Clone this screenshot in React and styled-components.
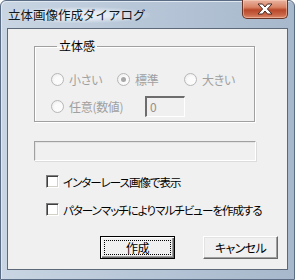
import React from "react";
import styled, { createGlobalStyle } from "styled-components";

const GlobalStyle = createGlobalStyle`
    html, body {
        margin: 0;
        padding: 0;
        background: #ffffff;
    }
    * {
        box-sizing: border-box;
    }
`;

const UI_FONT = `"Noto Sans CJK JP", "DejaVu Sans", sans-serif`;

const CloseIcon = () => (
    <svg width="18" height="12" viewBox="0 0 18 12">
        <path
            d="M2 1 H6.5 L9 4 L11.5 1 H16 L11.4 6 L16 11 H11.5 L9 8 L6.5 11 H2 L6.6 6 Z"
            fill="#ffffff"
            stroke="#4a2a22"
            strokeWidth="1"
            strokeLinejoin="round"
        />
    </svg>
);

const Radio = ({ checked, width, children }) => (
    <RadioItem width={width}>
        <RadioCircle>{checked && <RadioDot />}</RadioCircle>
        <OptionText>{children}</OptionText>
    </RadioItem>
);

const Check = ({ children }) => (
    <CheckRow>
        <CheckBox />
        <CheckText>{children}</CheckText>
    </CheckRow>
);

const App = () => {
    return (
        <>
            <GlobalStyle />
            <Window>
                <TitleBar>
                    <Title>立体画像作成ダイアログ</Title>
                    <CloseButton>
                        <CloseIcon />
                    </CloseButton>
                </TitleBar>
                <Client>
                    <Group>
                        <Legend>立体感</Legend>
                        <RadioRow>
                            <Radio width={66}>小さい</Radio>
                            <Radio width={67} checked>
                                標準
                            </Radio>
                            <Radio>大きい</Radio>
                        </RadioRow>
                        <RadioRow second>
                            <Radio width={94}>任意(数値)</Radio>
                            <NumberBox>0</NumberBox>
                        </RadioRow>
                    </Group>
                    <Progress />
                    <Check>インターレース画像で表示</Check>
                    <Check>パターンマッチによりマルチビューを作成する</Check>
                    <ButtonRow>
                        <Button isDefault>
                            <FocusRect>作成</FocusRect>
                        </Button>
                        <Button>キャンセル</Button>
                    </ButtonRow>
                </Client>
            </Window>
        </>
    );
};

export default App;

const Window = styled.div`
    width: 295px;
    height: 280px;
    display: flex;
    flex-direction: column;
    padding: 0 6px 9px 6px;
    border: 1px solid #5b6d84;
    border-radius: 6px 6px 0 0;
    background: linear-gradient(to right, #c9d5e2 0%, #b8c7d8 45%, #a7b8cc 100%);
    box-shadow: inset 1px 1px 0 #dfe7f0;
    font-family: ${UI_FONT};
    font-size: 12px;
    color: #000000;
`;

const TitleBar = styled.div`
    height: 28px;
    display: flex;
    align-items: flex-start;
    justify-content: space-between;
`;

const Title = styled.div`
    margin: 6px 0 0 1px;
    padding: 0 4px 0 0;
    line-height: 16px;
    font-size: 12.5px;
    color: #101820;
    background: radial-gradient(ellipse at center, rgba(235, 240, 246, 0.9) 30%, rgba(235, 240, 246, 0) 75%);
`;

const CloseButton = styled.div`
    width: 46px;
    height: 19px;
    margin: -1px 0 0 0;
    display: flex;
    align-items: center;
    justify-content: center;
    border: 1px solid #6a3426;
    border-top: none;
    border-radius: 0 0 5px 5px;
    background: linear-gradient(
        to bottom,
        #e9b3a0 0%,
        #d98466 40%,
        #b9482a 55%,
        #c86244 80%,
        #dc8a6c 100%
    );
    box-shadow: inset 0 0 0 1px rgba(255, 220, 200, 0.45);
`;

const Client = styled.div`
    flex: 1;
    display: flex;
    flex-direction: column;
    align-items: flex-start;
    padding: 0 0 10px 0;
    background: #f0f0f0;
    border: 1px solid #5d6878;
`;

const Group = styled.fieldset`
    margin: 11px 0 0 26px;
    padding: 0 0 0 16px;
    width: 221px;
    height: 82px;
    border: 1px solid #a0a0a0;
    box-shadow: 1px 1px 0 #ffffff, inset 1px 1px 0 #ffffff;
    display: flex;
    flex-direction: column;
    min-width: 0;
`;

const Legend = styled.legend`
    margin-left: 6px;
    padding: 0 2px;
    line-height: 12px;
    font-size: 12px;
    font-feature-settings: "palt";
    color: #000000;
`;

const RadioRow = styled.div`
    display: flex;
    align-items: center;
    height: 21px;
    margin-top: ${(p) => (p.second ? "6px" : "17px")};
`;

const RadioItem = styled.div`
    display: flex;
    align-items: center;
    gap: 5px;
    flex: none;
    width: ${(p) => (p.width ? `${p.width}px` : "auto")};
`;

const RadioCircle = styled.span`
    width: 13px;
    height: 13px;
    flex: none;
    border-radius: 50%;
    border: 1px solid #b7b7b7;
    background: radial-gradient(circle at 60% 60%, #fbfbfb 40%, #e6e6e6 100%);
    display: flex;
    align-items: center;
    justify-content: center;
`;

const RadioDot = styled.span`
    width: 5px;
    height: 5px;
    border-radius: 50%;
    background: #a8a8a8;
`;

const OptionText = styled.span`
    color: #a0a0a0;
    font-feature-settings: "palt";
    letter-spacing: -0.3px;
    line-height: 14px;
    white-space: nowrap;
`;

const NumberBox = styled.div`
    width: 40px;
    height: 21px;
    flex: none;
    padding: 2px 0 0 3px;
    line-height: 14px;
    color: #9a8e84;
    background: #f0f0f0;
    border-style: solid;
    border-width: 2px 1px 1px 2px;
    border-color: #6d6d6d #ffffff #ffffff #6d6d6d;
`;

const Progress = styled.div`
    margin: 19px 0 0 26px;
    width: 222px;
    height: 20px;
    border: 1px solid;
    border-color: #a0a0a0 #ffffff #ffffff #a0a0a0;
    box-shadow: inset 1px 1px 0 #e3e3e3, 1px 1px 0 #dcdcdc;
`;

const CheckRow = styled.div`
    display: flex;
    align-items: center;
    gap: 4px;
    height: 13px;
    margin: 14px 0 0 38px;
    & + & {
        margin-top: 15px;
    }
`;

const CheckBox = styled.span`
    width: 13px;
    height: 13px;
    flex: none;
    border: 1px solid;
    border-color: #808080 #ffffff #ffffff #808080;
    box-shadow: inset 1px 1px 0 #404040, inset -1px -1px 0 #d4d0c8;
    background: #ffffff;
`;

const CheckText = styled.span`
    font-size: 11.5px;
    font-feature-settings: "palt";
    letter-spacing: -1px;
    line-height: 14px;
    white-space: nowrap;
`;

const ButtonRow = styled.div`
    display: flex;
    gap: 28px;
    margin: 20px 0 0 92px;
`;

const Button = styled.div`
    width: 75px;
    height: 23px;
    display: flex;
    align-items: center;
    justify-content: center;
    padding: ${(p) => (p.isDefault ? "3px" : "0")};
    font-feature-settings: "palt";
    letter-spacing: -0.6px;
    background: #f0f0f0;
    border: 1px solid;
    border-color: ${(p) => (p.isDefault ? "#000000" : "#ffffff #696969 #696969 #ffffff")};
    box-shadow: ${(p) =>
        p.isDefault
            ? "inset 1px 1px 0 #ffffff, inset -1px -1px 0 #696969, inset -2px -2px 0 #a0a0a0"
            : "inset -1px -1px 0 #a0a0a0, inset 1px 1px 0 #e3e3e3"};
`;

const FocusRect = styled.span`
    flex: 1;
    align-self: stretch;
    display: flex;
    align-items: center;
    justify-content: center;
    border: 1px dotted #000000;
`;
